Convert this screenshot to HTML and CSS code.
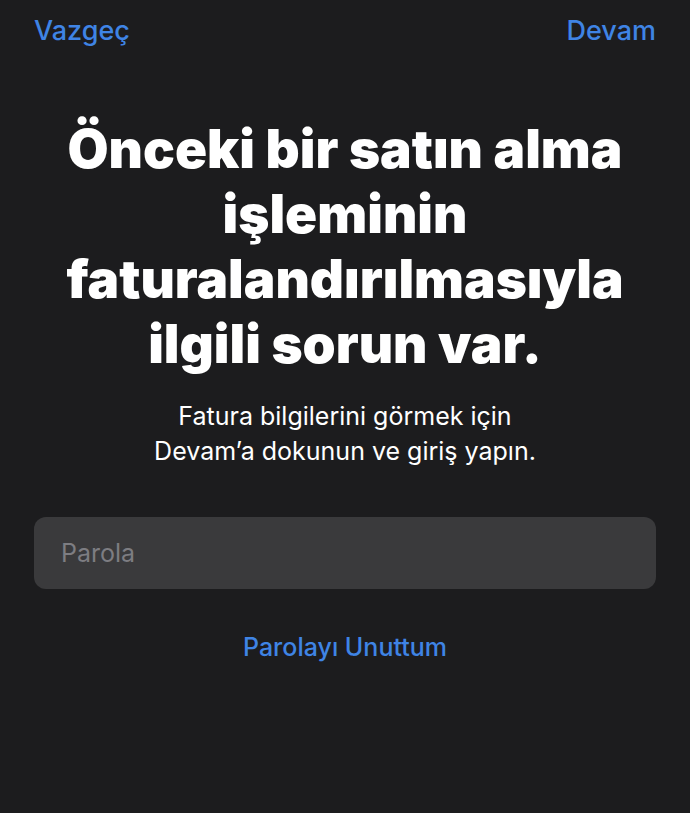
FILE: index.html
```html
<!DOCTYPE html>
<html lang="tr">
<head>
<meta charset="utf-8">
<link rel="stylesheet" href="styles.css">
</head>
<body>
<div class="screen">
  <div class="nav">
    <span class="nav-btn">Vazgeç</span>
    <span class="nav-btn">Devam</span>
  </div>
  <h1 class="title">Önceki bir satın alma işleminin faturalandırılmasıyla ilgili sorun var.</h1>
  <p class="subtitle">Fatura bilgilerini görmek için<br>Devam’a dokunun ve giriş yapın.</p>
  <div class="field"><span class="placeholder">Parola</span></div>
  <div class="link">Parolayı Unuttum</div>
</div>
</body>
</html>
```
FILE: styles.css
```css
html, body {
  margin: 0;
  padding: 0;
  background: #1c1c1e;
}
.screen {
  width: 690px;
  height: 813px;
  background: #1c1c1e;
  font-family: Inter, "Liberation Sans", sans-serif;
  color: #ffffff;
  display: flex;
  flex-direction: column;
  box-sizing: border-box;
  padding: 0 34px;
}
.nav {
  display: flex;
  justify-content: space-between;
  padding-top: 14px;
  height: 34px;
}
.nav-btn {
  color: #3f84e5;
  font-size: 27px;
  font-weight: 500;
  line-height: 34px;
}
.title {
  margin: 69px 0 0;
  text-align: center;
  font-size: 53px;
  font-weight: 900;
  line-height: 65px;
  letter-spacing: 0;
}
.subtitle {
  margin: 22px 0 0;
  text-align: center;
  font-size: 25px;
  line-height: 35px;
  font-weight: 400;
}
.field {
  margin-top: 48px;
  height: 72px;
  background: #3a3a3c;
  border-radius: 12px;
  display: flex;
  align-items: center;
  padding: 0 27px;
}
.placeholder {
  color: #7d7d82;
  font-size: 25px;
}
.link {
  margin-top: 43px;
  text-align: center;
  color: #3f84e5;
  font-size: 25px;
  font-weight: 500;
}
```
